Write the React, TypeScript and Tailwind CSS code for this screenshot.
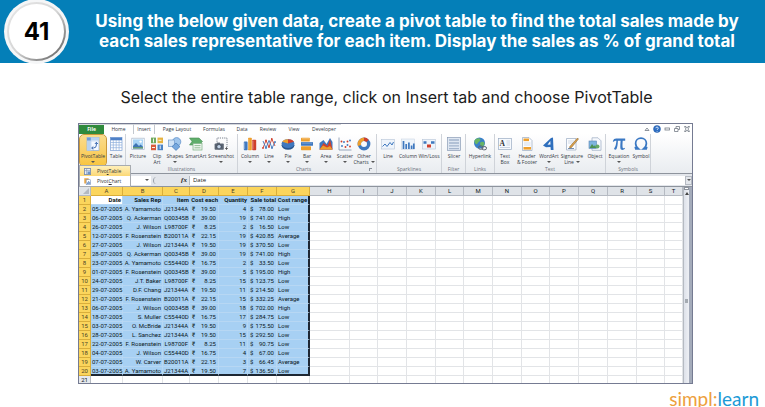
import type { ReactNode } from "react";

const BLUE = "#3f78bf";
const ORANGE = "#ee9f2d";
const RED = "#cf3f2c";

function Svg({ children }: { children: ReactNode }) {
  return (
    <svg viewBox="0 0 14 14" className="size-[14px] shrink-0" fill="none" aria-hidden="true">
      {children}
    </svg>
  );
}

const icons: Record<string, ReactNode> = {
  pivot: (
    <Svg>
      <rect x="1" y="0.5" width="12" height="13" fill="#f4f9ff" stroke="#8fb0dc" strokeWidth="0.7" />
      <path d="M1 4h12M5 .5v13" stroke="#b9cfeb" strokeWidth="0.6" />
      <rect x="1" y="0.5" width="12" height="3" fill="#b8d2f0" />
      <rect x="1" y="0.5" width="3.8" height="13" fill="#b8d2f0" />
      <rect x="1" y="0.5" width="3.8" height="3" fill="#6d9bd6" />
      <path d="M5.800 11h1.600a3 3 0 0 0 3-3V5.500M8.900 7l1.500-1.700L11.900 7M7.300 9.500l-1.600 1.500 1.600 1.500" stroke="#2c5da8" strokeWidth="0.900" />
    </Svg>
  ),
  table: (
    <Svg>
      <rect x="1.5" y="0.5" width="11.5" height="13" fill="#fff" stroke="#7ea2d4" strokeWidth="0.7" />
      <rect x="1.5" y="0.5" width="11.5" height="2.8" fill="#4f81c7" />
      <path d="M1.5 5.5h11.5M1.5 8h11.5M1.5 10.7h11.5M4.3 3v10.5M7.2 3v10.5M10.1 3v10.5" stroke="#8fb0dc" strokeWidth="0.7" />
    </Svg>
  ),
  picture: (
    <Svg>
      <rect x="0.8" y="1.2" width="12.4" height="11.4" fill="#fff" stroke="#a6b7ca" strokeWidth="0.7" />
      <rect x="2" y="2.4" width="10" height="9" fill="#a8d4f5" />
      <path d="M2 9l3-3 3 3 1.6-1.4L12 9.8v1.6H2z" fill="#3e75b3" />
      <path d="M2 10.2h10v1.2H2z" fill="#6da465" />
      <circle cx="9.6" cy="4.6" r="1.2" fill="#fff" />
    </Svg>
  ),
  clip: (
    <Svg>
      <rect x="1" y="0.6" width="5" height="5.6" fill="#6ea95d" />
      <rect x="7.5" y="0.6" width="5.5" height="5.6" fill="#e6b23e" />
      <rect x="1" y="7.6" width="5" height="5.6" fill="#d85a3b" />
      <rect x="7.5" y="7.6" width="5.5" height="5.6" fill="#4a82c4" />
      <path d="M3.5 1.5v4M8.5 3.3h3M2 10.5h3M10.2 8.5v3.6" stroke="#fff" strokeWidth="0.9" />
    </Svg>
  ),
  shapes: (
    <Svg>
      <circle cx="8.6" cy="4.8" r="4.2" fill="#9fc5ec" stroke="#5c8cc7" strokeWidth="0.7" />
      <rect x="0.6" y="3" width="6" height="6.6" fill="#cfe2f6" stroke="#6d98cc" strokeWidth="0.7" />
      <path d="M8 6l4 3.6-4 3.8-4-3.8z" fill="#77a8de" stroke="#4478b7" strokeWidth="0.7" />
    </Svg>
  ),
  smartart: (
    <Svg>
      <path d="M0.500 1h9.500l3.500 3.500L10 8H.5l2.500-3.500z" fill="#5fae6b" stroke="#4b8f55" strokeWidth="0.6" />
      <rect x="4" y="6.4" width="9" height="6.6" fill="#eef5ee" stroke="#7aae80" strokeWidth="0.7" />
      <path d="M5.500 8.6h6M5.500 10.8h6" stroke="#7aae80" strokeWidth="0.8" />
    </Svg>
  ),
  screenshot: (
    <Svg>
      <path d="M3 7V1h10v9" stroke="#555f6e" strokeWidth="0.8" strokeDasharray="1.2 1" />
      <rect x="0.6" y="6.6" width="9.2" height="6.2" rx="0.8" fill="#5b6573" />
      <rect x="3" y="5.6" width="3" height="1.5" fill="#5b6573" />
      <circle cx="5" cy="9.7" r="2.2" fill="#c5d5e8" stroke="#2f3947" strokeWidth="0.7" />
      <path d="M11 11.5h3M12.5 10v3" stroke="#444" strokeWidth="0.7" />
    </Svg>
  ),
  column: (
    <Svg>
      <rect x="0.8" y="4.6" width="3.8" height="8.6" rx="0.8" fill={BLUE} />
      <rect x="5" y="0.8" width="3.8" height="12.4" rx="0.8" fill={ORANGE} />
      <rect x="9.2" y="2.8" width="4" height="10.4" rx="0.8" fill={RED} />
      <path d="M5.8 1.8v10.4M1.6 5.6v6.6M10 3.8v8.4" stroke="#fff" strokeOpacity=".45" strokeWidth=".7" />
    </Svg>
  ),
  line: (
    <Svg>
      <path d="M1 11l3-7.5L7 10l2.8-8L13 9" stroke={RED} strokeWidth="0.9" />
      <path d="M1 4l3 7 3-7.6 3 7.6 3-6" stroke={BLUE} strokeWidth="0.9" />
      <path d="M1 11h0M4 3.5h0M7 10h0M9.8 2h0" stroke={RED} strokeWidth="1.8" strokeLinecap="round" />
      <path d="M4 11h0M10 11h0M13 5h0" stroke={BLUE} strokeWidth="1.8" strokeLinecap="round" />
    </Svg>
  ),
  pie: (
    <Svg>
      <ellipse cx="7" cy="8.3" rx="6.4" ry="4.4" fill="#28568f" />
      <ellipse cx="7" cy="6.6" rx="6.4" ry="4.4" fill={BLUE} />
      <path d="M7 6.6L1.2 4.8C2.4 2.8 4.7 2.1 7 2.2z" fill={ORANGE} />
      <path d="M7 6.6V2.2c2.800 0 5 .8 6 2.500z" fill={RED} />
    </Svg>
  ),
  bar: (
    <Svg>
      <rect x="1" y="0.8" width="8.800" height="3.800" rx="0.6" fill={ORANGE} />
      <rect x="1" y="5" width="12" height="3.800" rx="0.6" fill={BLUE} />
      <rect x="1" y="9.200" width="10" height="4" rx="0.600" fill={ORANGE} />
      <path d="M2 1.800h7M2 6h10" stroke="#fff" strokeOpacity=".5" strokeWidth=".7" />
    </Svg>
  ),
  area: (
    <Svg>
      <path d="M.5 12.500V6l4-3 3 4 3.500-6 2.500 4v7.500z" fill={BLUE} />
      <path d="M.5 12.500l4-6.500 4 3L11 2.500l2.500 10z" fill={RED} />
      <path d="M.5 12.500l3.500-4 4 2 3-1.500 2.500 3.500z" fill={ORANGE} />
    </Svg>
  ),
  scatter: (
    <Svg>
      <path d="M1 .5V13h12.500" stroke="#7f93ad" strokeWidth="0.800" />
      <path d="M4 9h0M6 5h0M9.500 8h0M12 3.500h0" stroke={BLUE} strokeWidth="1.900" strokeLinecap="round" />
      <path d="M3.500 4.500h0M7.500 10h0M9.500 4.500h0M12 9.500h0" stroke={RED} strokeWidth="1.900" strokeLinecap="round" />
    </Svg>
  ),
  other: (
    <Svg>
      <circle cx="7" cy="7" r="4.700" stroke={BLUE} strokeWidth="3.400" />
      <path d="M7 2.300A4.700 4.700 0 0 0 2.500 8.400" stroke={ORANGE} strokeWidth="3.400" />
      <path d="M7 2.300A4.700 4.700 0 0 1 10.500 4" stroke={RED} strokeWidth="3.400" />
    </Svg>
  ),
  spark: (
    <Svg>
      <rect x="0.500" y="2.500" width="13" height="9.500" fill="#eef4fb" stroke="#b4c3d6" strokeWidth="0.600" />
      <path d="M1.500 9.500l2.500-2.500 2 2.500 3-4 2 2.500 1.500-3" stroke={BLUE} strokeWidth="1" />
    </Svg>
  ),
  sparkcol: (
    <Svg>
      <rect x="0.500" y="2" width="13" height="10.500" fill="#eef4fb" stroke="#c3cedd" strokeWidth="0.500" />
      <path d="M2.500 12V4M5.200 12V7M7.900 12V5.500M10.600 12V8.500M12.800 12V6.500" stroke={BLUE} strokeWidth="1.700" />
    </Svg>
  ),
  winloss: (
    <Svg>
      <rect x="0.500" y="2.500" width="13" height="9.500" fill="#eef4fb" stroke="#b4c3d6" strokeWidth="0.600" />
      <path d="M1.500 5.500h3M9 5.500h3.500" stroke={BLUE} strokeWidth="2.600" />
      <path d="M5 9h4" stroke={RED} strokeWidth="3" />
    </Svg>
  ),
  slicer: (
    <Svg>
      <rect x="0.500" y="0.500" width="13" height="13" fill="#dfe7f2" stroke="#8b9cb5" strokeWidth="0.700" />
      <path d="M2 3h10M2 6h10M2 8.800h10M2 11.600h10" stroke="#a4b5cd" strokeWidth="1.300" />
    </Svg>
  ),
  link: (
    <Svg>
      <circle cx="6.500" cy="6" r="5.500" fill="#3980c9" />
      <path d="M3 2c2-1.500 4-.8 4.500.5S5 5 4.500 6.500 2 7 1.500 5 2 3 3 2zM8 5c2-.6 3.500 0 3.500 1.500S10 10 8.500 9.500 6.500 5.500 8 5z" fill="#68b565" />
      <rect x="5.500" y="9" width="4.600" height="3.200" rx="1.600" stroke="#5a6472" strokeWidth="1" />
      <rect x="8.900" y="9.600" width="4.600" height="3.200" rx="1.600" stroke="#5a6472" strokeWidth="1" />
    </Svg>
  ),
  textbox: (
    <Svg>
      <rect x="0.500" y="1.500" width="13" height="11" fill="#f6f9fd" stroke="#9aabc2" strokeWidth="0.700" />
      <text x="1.500" y="8.500" fontSize="7.500" fontWeight="700" fill="#333" fontFamily="Liberation Serif, serif">A</text>
      <path d="M8.500 4h3.500M8.500 6h3.500M8.500 8h3.500M2 10.500h10" stroke="#b9c6d8" strokeWidth="0.700" />
    </Svg>
  ),
  headfoot: (
    <Svg>
      <path d="M2.500.5H9l3 3v10H2.500z" fill="#fbfcfe" stroke="#9aabc2" strokeWidth="0.700" />
      <rect x="3.500" y="1.500" width="5.500" height="2.600" fill={ORANGE} />
      <rect x="3.500" y="10" width="7.500" height="2.600" fill={ORANGE} />
      <path d="M4 6h6.500M4 8h6.500" stroke="#c5d0df" strokeWidth="0.700" />
    </Svg>
  ),
  wordart: (
    <Svg>
      <path d="M1 8.500L9 1l2-.5.5 12.500H8.800l-.3-3-4.500.3zM5.500 7.700l3-.3-.2-3.500z" fill="#2f6fbd" fillRule="evenodd" />
    </Svg>
  ),
  sign: (
    <Svg>
      <path d="M1.500 1.500h9.500v11.500H1.500z" fill="#fbfcfe" stroke="#9aabc2" strokeWidth="0.700" />
      <path d="M3 4h6M3 6h5" stroke="#c0ccdc" strokeWidth="0.700" />
      <path d="M12.500 1l1 1-7 8.500-2 .8.500-2z" fill="#dca24a" stroke="#7d5a2b" strokeWidth="0.500" />
      <path d="M3 11.500h6" stroke="#56749c" strokeWidth="0.800" />
    </Svg>
  ),
  object: (
    <Svg>
      <path d="M4 .8h6l3 3v9.500H4z" fill="#f7f9fd" stroke="#9aabc2" strokeWidth="0.700" />
      <rect x="1" y="4" width="7.500" height="7.500" fill="#7fb5de" stroke="#5d86b5" strokeWidth="0.600" />
      <path d="M1.500 11l2.500-4 2 2.500L7 8l1.500 3z" fill="#4c9152" />
      <circle cx="9.500" cy="9.500" r="2" fill="#67a966" />
    </Svg>
  ),
  equation: (
    <Svg>
      <path d="M.8 4.500C1.500 2.200 2.600 1.600 4.200 1.600h9v2.100h-2.500c-.2 3-.3 5-.1 6.500.1 1.200.9 1.300 2 .5l.4.8c-1 1.600-4.300 2.200-4.600-.3-.2-2 0-4.500.2-7.500H5.900c-.1 3-.4 6-1.400 8.300-.4 1-2.600 1-2.400-.4C3.500 9.500 4.200 7 4.400 3.700c-1.300 0-2 0-2.700 1.100z" fill="#3a78c3" />
    </Svg>
  ),
  symbol: (
    <Svg>
      <path d="M1.200 9.800l.6 2.100h2.800C2.800 10.500 1.600 9 1.600 6.300 1.600 3.200 4 1.200 7 1.200s5.400 2 5.400 5.100c0 2.700-1.200 4.200-3 5.600h2.800l.6-2.100" stroke="#3a78c3" strokeWidth="1.700" />
    </Svg>
  ),
};

type Tool = { icon: string; label: string; second?: string; arrow?: boolean; width: string; active?: boolean };
type Group = { id: string; name?: string; width: string; launcher?: boolean; tools: Tool[] };

const groups: Group[] = [
  {
    id: "tables",
    width: "w-[47px] pl-px",
    tools: [
      { icon: "pivot", label: "PivotTable", arrow: true, width: "w-[26px]", active: true },
      { icon: "table", label: "Table", width: "w-[20px]" },
    ],
  },
  {
    id: "illustrations",
    name: "Illustrations",
    width: "w-[112px]",
    tools: [
      { icon: "picture", label: "Picture", width: "w-[24px]" },
      { icon: "clip", label: "Clip", second: "Art", width: "w-[14px]" },
      { icon: "shapes", label: "Shapes", arrow: true, width: "w-[22px]" },
      { icon: "smartart", label: "SmartArt", width: "w-[20px]" },
      { icon: "screenshot", label: "Screenshot", arrow: true, width: "w-[30px]" },
    ],
  },
  {
    id: "charts",
    name: "Charts",
    width: "w-[139px]",
    launcher: true,
    tools: [
      { icon: "column", label: "Column", arrow: true, width: "w-[24px]" },
      { icon: "line", label: "Line", arrow: true, width: "w-[14px]" },
      { icon: "pie", label: "Pie", arrow: true, width: "w-[24px]" },
      { icon: "bar", label: "Bar", arrow: true, width: "w-[14px]" },
      { icon: "area", label: "Area", arrow: true, width: "w-[24px]" },
      { icon: "scatter", label: "Scatter", arrow: true, width: "w-[14px]" },
      { icon: "other", label: "Other", second: "Charts", arrow: true, width: "w-[24px]" },
    ],
  },
  {
    id: "sparklines",
    name: "Sparklines",
    width: "w-[65px]",
    tools: [
      { icon: "spark", label: "Line", width: "w-[22px]" },
      { icon: "sparkcol", label: "Column", width: "w-[18px]" },
      { icon: "winloss", label: "Win/Loss", width: "w-[24px]" },
    ],
  },
  { id: "filter", name: "Filter", width: "w-[24px]", tools: [{ icon: "slicer", label: "Slicer", width: "w-[24px]" }] },
  { id: "links", name: "Links", width: "w-[29px]", tools: [{ icon: "link", label: "Hyperlink", width: "w-[28px]" }] },
  {
    id: "text",
    name: "Text",
    width: "w-[111px]",
    tools: [
      { icon: "textbox", label: "Text", second: "Box", width: "w-[20px]" },
      { icon: "headfoot", label: "Header", second: "& Footer", width: "w-[24px]" },
      { icon: "wordart", label: "WordArt", arrow: true, width: "w-[20px]" },
      { icon: "sign", label: "Signature", second: "Line", arrow: true, width: "w-[26px]" },
      { icon: "object", label: "Object", width: "w-[20px]" },
    ],
  },
  {
    id: "symbols",
    name: "Symbols",
    width: "w-[45px]",
    tools: [
      { icon: "equation", label: "Equation", arrow: true, width: "w-[26px]" },
      { icon: "symbol", label: "Symbol", width: "w-[18px]" },
    ],
  },
];

const tabs = [
  { name: "File", className: "w-[25px] bg-[#2f8a3c] font-bold text-white" },
  { name: "Home", className: "w-[29px]" },
  { name: "Insert", className: "w-[22px] border-x border-[#c3c8cf] bg-white" },
  { name: "Page Layout", className: "w-[44px]" },
  { name: "Formulas", className: "w-[30px]" },
  { name: "Data", className: "w-[26px]" },
  { name: "Review", className: "w-[26px]" },
  { name: "View", className: "w-[26px]" },
  { name: "Developer", className: "w-[34px]" },
];

const letters = "ABCDEFGHIJKLMNOPQRST".split("");
const columnWidths = [
  "w-[12px]", "w-[32px]", "w-[40px]", "w-[27px]", "w-[29px]", "w-[29px]", "w-[29px]", "w-[33px]",
  "w-[40px]", "w-[28px]", "w-[29px]", "w-[29px]", "w-[28px]", "w-[29px]", "w-[29px]", "w-[28px]",
  "w-[29px]", "w-[29px]", "w-[29px]", "w-[28px]",
];
const restLetters = letters.slice(7);

const rows: [string, string, string, string, number, string, string][] = [
  ["05-07-2005", "A. Yamamoto", "J21344A", "19.50", 4, "78.00", "Low"],
  ["06-07-2005", "Q. Ackerman", "Q00345B", "39.00", 19, "741.00", "High"],
  ["26-07-2005", "J. Wilson", "L98700F", "8.25", 2, "16.50", "Low"],
  ["12-07-2005", "F. Rosenstein", "B20011A", "22.15", 19, "420.85", "Average"],
  ["27-07-2005", "J. Wilson", "J21344A", "19.50", 19, "370.50", "Low"],
  ["28-07-2005", "Q. Ackerman", "Q00345B", "39.00", 19, "741.00", "High"],
  ["23-07-2005", "A. Yamamoto", "C55440D", "16.75", 2, "33.50", "Low"],
  ["01-07-2005", "F. Rosenstein", "Q00345B", "39.00", 5, "195.00", "High"],
  ["24-07-2005", "J.T. Baker", "L98700F", "8.25", 15, "123.75", "Low"],
  ["29-07-2005", "D.F. Chang", "J21344A", "19.50", 11, "214.50", "Low"],
  ["21-07-2005", "F. Rosenstein", "B20011A", "22.15", 15, "332.25", "Average"],
  ["06-07-2005", "J. Wilson", "Q00345B", "39.00", 18, "702.00", "High"],
  ["18-07-2005", "S. Muller", "C55440D", "16.75", 17, "284.75", "Low"],
  ["03-07-2005", "O. McBride", "J21344A", "19.50", 9, "175.50", "Low"],
  ["28-07-2005", "L. Sanchez", "J21344A", "19.50", 15, "292.50", "Low"],
  ["22-07-2005", "F. Rosenstein", "L98700F", "8.25", 11, "90.75", "Low"],
  ["04-07-2005", "J. Wilson", "C55440D", "16.75", 4, "67.00", "Low"],
  ["07-07-2005", "W. Carver", "B20011A", "22.15", 3, "66.45", "Average"],
  ["03-07-2005", "A. Yamamoto", "J21344A", "19.50", 7, "136.50", "Low"],
];

function Arrow() {
  return <span className="inline-block border-x-[2px] border-t-[2px] border-x-transparent border-t-[#555]" />;
}

function ToolButton({ tool }: { tool: Tool }) {
  return (
    <button
      type="button"
      className={`flex h-[31px] shrink-0 flex-col items-center pt-[2px] whitespace-nowrap ${tool.width} ${
        tool.active ? "rounded-sm bg-gradient-to-b from-[#fbdc8c] to-[#f8c53c] outline outline-[#c9983a]" : ""
      }`}
    >
      {icons[tool.icon]}
      <span className="mt-[2px]">{tool.label}</span>
      <span className="flex h-[6px] items-center gap-[2px]">
        {tool.second}
        {tool.arrow && <Arrow />}
      </span>
    </button>
  );
}

function Ribbon() {
  return (
    <div className="relative flex h-[40px] border-b border-[#8e949d] bg-gradient-to-b from-white to-[#e9ecf0] text-[5px] leading-[6px] text-[#333a44]">
      {groups.map((group) => (
        <section key={group.id} className={`flex shrink-0 flex-col border-r border-[#cfd3d9] pt-px ${group.width}`}>
          <div className="flex">
            {group.tools.map((tool) => (
              <ToolButton key={tool.label} tool={tool} />
            ))}
          </div>
          {group.name && (
            <div className="flex items-center justify-center text-[#6c727c]">
              <span className="flex-1 text-center">{group.name}</span>
              {group.launcher && <span className="mr-1 size-[3px] border-t border-l border-[#8a909a]" />}
            </div>
          )}
        </section>
      ))}
      <div
        role="menu"
        className="absolute top-[31px] left-0 z-10 w-[52px] border border-[#a7abb0] bg-white text-[#333]"
      >
        <button type="button" role="menuitem" className="flex h-[10px] w-full items-center gap-[6px] bg-gradient-to-b from-[#fff0ba] to-[#fbd874] pl-[4px]">
          <svg viewBox="0 0 8 8" className="size-[7px]" aria-hidden="true">
            <rect x=".5" y=".5" width="7" height="7" fill="#e6eefa" stroke="#7b8fb0" />
            <path d="M.5 3h7M3 .5v7" stroke="#7b8fb0" strokeWidth=".7" />
            <rect x="4" y="4" width="3" height="3" fill="#6d93c8" />
          </svg>
          <span>Pivo<u>t</u>Table</span>
        </button>
        <button type="button" role="menuitem" className="flex h-[10px] w-full items-center gap-[6px] pl-[4px]">
          <svg viewBox="0 0 8 8" className="size-[7px]" aria-hidden="true">
            <rect x=".3" y=".3" width="5" height="6" fill="#e7a64a" />
            <rect x="2.500" y="2" width="5" height="5.700" fill="#fff" stroke="#6b87b5" strokeWidth=".6" />
            <path d="M4 7V5M5.300 7V3.500M6.500 7V4.500" stroke="#376cb4" strokeWidth=".8" />
          </svg>
          <span>Pivot<u>C</u>hart</span>
        </button>
      </div>
    </div>
  );
}

function WindowControls() {
  return (
    <svg viewBox="0 0 48 10" className="ml-auto h-[10px] w-[48px]" fill="none" stroke="#747b86" strokeWidth="0.800" aria-hidden="true">
      <path d="M1 6.500l2-2.500 2 2.500z" />
      <circle cx="13" cy="5" r="3.500" fill="#2f6fc4" stroke="#1f56a5" strokeWidth="0.500" />
      <path d="M11.800 4.200c0-1.600 2.500-1.500 2.500 0 0 .9-1.200.8-1.200 1.700M13.100 7v.7" stroke="#fff" />
      <rect x="21" y="4" width="4.500" height="2" />
      <path d="M30.500 4.500h3.500v3h-3.500zM32 4.500v-2h3.500v3H34" />
      <path d="M40.500 2.500H42l1 1.500 1-1.500h1.500L44 5l1.500 2.500H44L43 6l-1 1.500h-1.500L42 5z" />
    </svg>
  );
}

function FormulaBar() {
  return (
    <div className="flex h-[13px] items-center border-b border-[#8e949d] bg-[#e3e6eb] text-[6px] leading-[9px] text-[#222]">
      <input aria-label="Name box" className="h-[9px] w-[64px] bg-white" />
      <button type="button" aria-label="Choose name" className="flex h-[9px] w-[8px] items-center justify-center bg-white">
        <Arrow />
      </button>
      <span className="ml-[2px] h-[7px] w-[26px] rounded-l-full border-l border-[#9aa0a9]" />
      <label htmlFor="formula" className="w-[10px] text-center font-['Liberation_Serif',serif] text-[7px] font-bold italic">fx</label>
      <input
        id="formula"
        readOnly
        value="Date"
        className="h-[9px] min-w-0 flex-1 border-l border-[#b5bac2] bg-white pl-[3px] outline-none"
      />
      <button type="button" aria-label="Expand formula bar" className="flex h-[9px] w-[7px] items-center justify-center border border-[#b5bac2]">
        <Arrow />
      </button>
    </div>
  );
}

const cell = "h-[9px] border-r border-b border-[#b7d7f3] bg-[#a7d0f3] p-0 px-px";
const headCell = "h-[9px] border-b border-[#b7d7f3] bg-[#a7d0f3] p-0 pr-px";
const blank = "h-[9px] border-r border-b border-[#e2e4e7] p-0";
const yellow = "h-[9px] border-r border-b border-[#d9ae3a] bg-[#fbd55c] p-0 text-center font-normal text-[#4c4227]";

function Money({ sign, value }: { sign: string; value: string }) {
  return (
    <div className="flex justify-between px-px">
      <span>{sign}</span>
      <span>{value}</span>
    </div>
  );
}

function Sheet() {
  return (
    <div className="flex">
      <div className="min-w-0 flex-1">
        <table className="w-full table-fixed border-separate border-spacing-0 font-['Roboto','Noto_Sans',sans-serif] text-[6px] leading-[8px] whitespace-nowrap text-[#0c1822]">
          <colgroup>
            {columnWidths.map((width, i) => (
              <col key={i} className={width} />
            ))}
            <col />
          </colgroup>
          <thead>
            <tr>
              <th className="h-[9px] border-r border-b border-[#b5bac2] bg-[#dfe3e8] p-0">
                <span className="mr-px ml-auto block size-0 border-b-[6px] border-l-[6px] border-b-[#b3b9c2] border-l-transparent" />
              </th>
              {letters.map((letter, i) => (
                <th
                  key={letter}
                  scope="col"
                  className={i < 7 ? yellow : "h-[9px] border-r border-b border-[#b5bac2] bg-[#dfe3e8] p-0 text-center font-normal"}
                >
                  {letter}
                </th>
              ))}
            </tr>
          </thead>
          <tbody>
            <tr className="text-right font-bold">
              <th scope="row" className={yellow}>1</th>
              <td className="h-[9px] border-r border-b border-[#b7d7f3] bg-white p-0 px-px">Date</td>
              <td className={cell}>Sales Rep</td>
              <td className={headCell}>Item</td>
              <td className={headCell}>Cost each</td>
              <td className={headCell}>Quantity</td>
              <td className={headCell}>Sale total</td>
              <td className="h-[9px] border-r-2 border-b border-r-[#1d2733] border-b-[#b7d7f3] bg-[#a7d0f3] p-0 text-center">Cost range</td>
              {restLetters.map((letter) => <td key={letter} className={blank} />)}
            </tr>
            {rows.map(([date, rep, item, cost, quantity, total, range], i) => {
              const last = i === rows.length - 1;
              const body = last
                ? "h-[9px] border-r border-b-2 border-r-[#b7d7f3] border-b-[#1d2733] bg-[#a7d0f3] p-0 px-px leading-[7px]"
                : cell;
              return (
                <tr key={i} className="text-right">
                  <th scope="row" className={yellow}>{i + 2}</th>
                  <td className={body}>{date}</td>
                  <td className={body}>{rep}</td>
                  <td className={body}>{item}</td>
                  <td className={body}><Money sign="₹" value={cost} /></td>
                  <td className={body}>{quantity}</td>
                  <td className={body}><Money sign="$" value={total} /></td>
                  <td
                    className={
                      last
                        ? "h-[9px] border-r-2 border-b-2 border-[#1d2733] bg-[#a7d0f3] p-0 pl-px text-left leading-[7px]"
                        : "h-[9px] border-r-2 border-b border-r-[#1d2733] border-b-[#b7d7f3] bg-[#a7d0f3] p-0 pl-px text-left"
                    }
                  >
                    {range}
                  </td>
                  {restLetters.map((letter) => <td key={letter} className={blank} />)}
                </tr>
              );
            })}
            <tr>
              <th scope="row" className="h-[7px] border-r border-[#b5bac2] bg-[#e6e9ed] p-0 text-center leading-[7px] font-normal">21</th>
              {letters.map((letter) => (
                <td key={letter} className="h-[7px] border-r border-[#e2e4e7] p-0" />
              ))}
            </tr>
          </tbody>
        </table>
      </div>
      <div className="flex w-[9px] shrink-0 flex-col items-center border-r-[3px] border-l border-r-[#a4abba] border-l-[#b5bac2] bg-gradient-to-r from-[#dde1e9] to-[#eef0f5]">
        <span className="h-[3px] w-full border border-[#8d939d] bg-white" />
        <span className="mt-[2px] border-x-[2px] border-b-[3px] border-x-transparent border-b-[#444]" />
        <span className="mt-[104px] h-[4px] w-[3px] bg-[#a5abb2]" />
      </div>
    </div>
  );
}

export default function App() {
  return (
    <main className="flex h-screen flex-col overflow-hidden bg-white font-['Open_Sans','Noto_Sans',sans-serif]">
      <header className="flex h-[63px] shrink-0 items-center bg-[#047fb8] pl-[4px] font-['Inter',sans-serif]">
        <div className="size-[65px] shrink-0 rounded-full bg-[#f5f6f7] p-[3px]">
          <div className="size-full rounded-full bg-gradient-to-br from-[#e8e8e8] via-[#d5d5d5] to-[#555] p-[2px]">
            <div className="flex size-full items-center justify-center rounded-full bg-white text-[24px] font-bold text-black">
              41
            </div>
          </div>
        </div>
        <h1 className="flex-1 pb-[2px] text-center text-[17px] leading-[20px] font-bold text-white">
          Using the below given data, create a pivot table to find the total sales made by
          <br />
          each sales representative for each item. Display the sales as % of grand total
        </h1>
      </header>

      <p className="mt-[24px] pl-[8px] text-center font-['Inter',sans-serif] text-[16px] leading-[20px] text-[#1c1c1c]">
        Select the entire table range, click on Insert tab and choose PivotTable
      </p>

      <section className="mt-[16px] mr-[72px] ml-[78px] shrink-0 overflow-hidden border border-[#757b92] bg-white">
        <nav className="flex h-[10px] bg-white text-[5px] leading-[9px] whitespace-nowrap text-[#333a44]">
          {tabs.map((tab) => (
            <button key={tab.name} type="button" className={`shrink-0 border-t border-t-[#d5d8dd] ${tab.className}`}>
              {tab.name}
            </button>
          ))}
          <WindowControls />
        </nav>
        <Ribbon />
        <FormulaBar />
        <Sheet />
      </section>

      <footer className="mr-[6px] ml-auto shrink-0 pt-px font-['Lato',sans-serif] text-[19px] leading-[28px]">
        <span className="text-[#eda03c]">simpl:</span>
        <span className="text-[#1c9ad6]">learn</span>
      </footer>
    </main>
  );
}
